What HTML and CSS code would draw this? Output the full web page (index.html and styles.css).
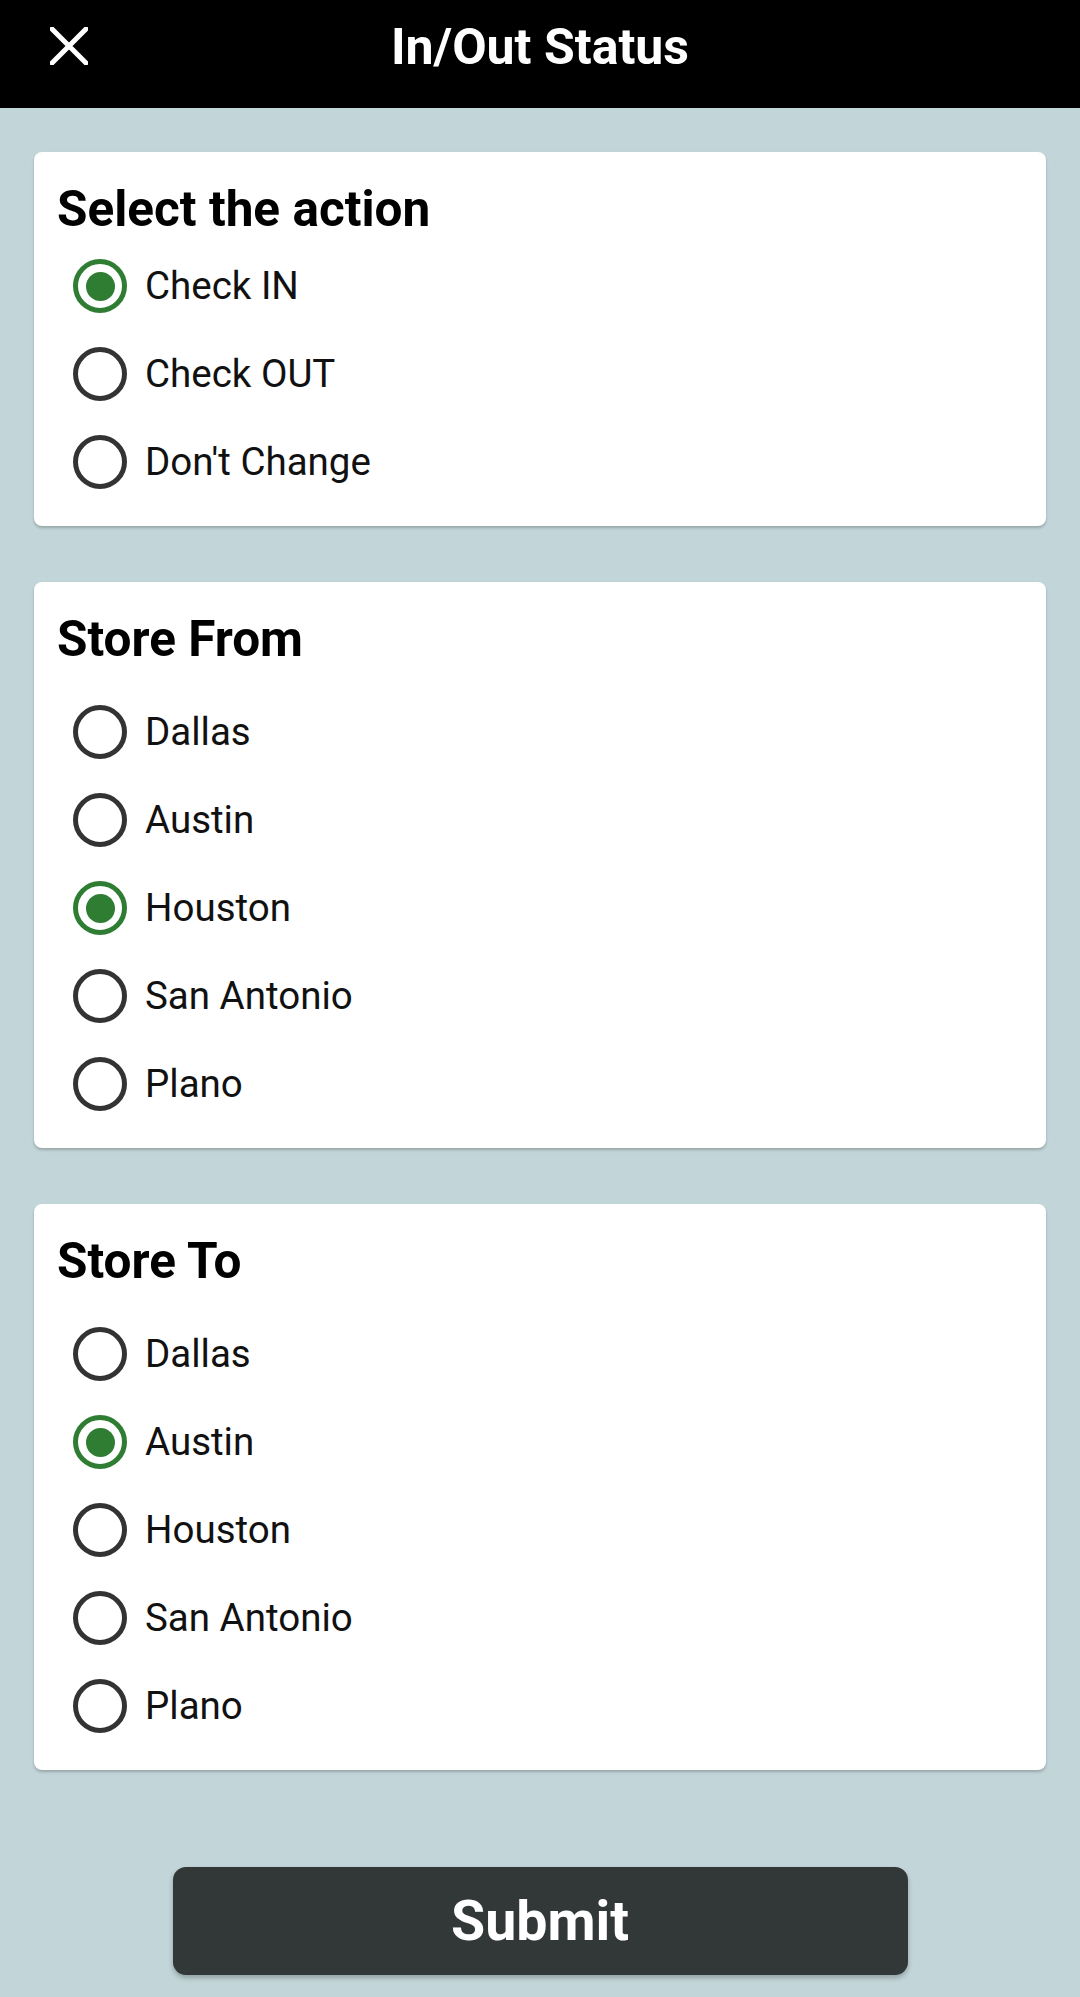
FILE: index.html
```html
<!DOCTYPE html>
<html lang="en">
<head>
<meta charset="utf-8">
<title>In/Out Status</title>
<link rel="stylesheet" href="styles.css">
</head>
<body>
<header class="topbar">
  <button class="close" aria-label="Close">
    <svg viewBox="0 0 38 38" width="38" height="38"><path d="M2 2 L36 36 M36 2 L2 36" stroke="#fff" stroke-width="5" stroke-linecap="square" fill="none"/></svg>
  </button>
  <h1 class="title">In/Out Status</h1>
  <span class="spacer"></span>
</header>
<main class="content">
  <section class="card card-tight">
    <h2 class="card-title">Select the action</h2>
    <div class="options">
      <div class="option"><span class="radio checked"></span><span class="label">Check IN</span></div>
      <div class="option"><span class="radio"></span><span class="label">Check OUT</span></div>
      <div class="option"><span class="radio"></span><span class="label">Don't Change</span></div>
    </div>
  </section>
  <section class="card">
    <h2 class="card-title">Store From</h2>
    <div class="options">
      <div class="option"><span class="radio"></span><span class="label">Dallas</span></div>
      <div class="option"><span class="radio"></span><span class="label">Austin</span></div>
      <div class="option"><span class="radio checked"></span><span class="label">Houston</span></div>
      <div class="option"><span class="radio"></span><span class="label">San Antonio</span></div>
      <div class="option"><span class="radio"></span><span class="label">Plano</span></div>
    </div>
  </section>
  <section class="card">
    <h2 class="card-title">Store To</h2>
    <div class="options">
      <div class="option"><span class="radio"></span><span class="label">Dallas</span></div>
      <div class="option"><span class="radio checked"></span><span class="label">Austin</span></div>
      <div class="option"><span class="radio"></span><span class="label">Houston</span></div>
      <div class="option"><span class="radio"></span><span class="label">San Antonio</span></div>
      <div class="option"><span class="radio"></span><span class="label">Plano</span></div>
    </div>
  </section>
  <div class="actions">
    <button class="submit">Submit</button>
  </div>
</main>
</body>
</html>
```

FILE: styles.css
```css
* { box-sizing: border-box; }
html, body {
  margin: 0;
  padding: 0;
}
body {
  background: #c2d5d8;
  font-family: Roboto, "Liberation Sans", Arial, sans-serif;
  min-height: 1997px;
}
.topbar {
  height: 108px;
  background: #000;
  display: grid;
  grid-template-columns: 1fr auto 1fr;
  align-items: center;
}
.close {
  justify-self: start;
  margin-left: 50px;
  width: 38px;
  height: 38px;
  padding: 0;
  border: 0;
  background: none;
  display: flex;
  margin-top: -17px;
}
.title {
  margin: 0;
  color: #fff;
  font-size: 50px;
  font-weight: 700;
  line-height: 58px;
  margin-top: -14px;
}
.content {
  padding: 44px 34px 0;
  display: flex;
  flex-direction: column;
  gap: 56px;
}
.card {
  background: #fff;
  border-radius: 8px;
  box-shadow: 0 2px 3px rgba(0, 0, 0, 0.22);
  padding: 28px 23px 20px;
}
.card-title {
  margin: 0 0 19px;
  font-size: 49.5px;
  font-weight: 700;
  line-height: 59px;
  color: #000;
}
.card-tight .card-title {
  margin-bottom: 3px;
}
.options {
  display: flex;
  flex-direction: column;
}
.option {
  height: 88px;
  display: flex;
  align-items: center;
  gap: 18px;
  padding-left: 16px;
}
.radio {
  width: 54px;
  height: 54px;
  border-radius: 50%;
  border: 5px solid #333;
  display: flex;
  align-items: center;
  justify-content: center;
  flex: none;
}
.radio.checked {
  border-color: #2e7d32;
}
.radio.checked::after {
  content: "";
  width: 29px;
  height: 29px;
  border-radius: 50%;
  background: #2e7d32;
}
.label {
  font-size: 38.5px;
  color: #111;
  line-height: 46px;
}
.actions {
  display: flex;
  justify-content: center;
  padding-top: 41px;
}
.submit {
  width: 735px;
  height: 108px;
  border: 0;
  border-radius: 13px;
  background: #323738;
  color: #fff;
  font-family: Roboto, "Liberation Sans", Arial, sans-serif;
  font-size: 55.5px;
  font-weight: 700;
  box-shadow: 0 3px 5px rgba(0, 0, 0, 0.25);
  padding: 0;
}
```
